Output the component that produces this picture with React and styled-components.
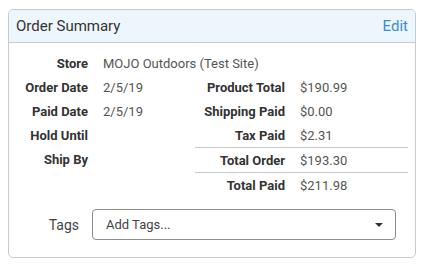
import styled, { createGlobalStyle } from "styled-components";

const GlobalStyle = createGlobalStyle`
  body {
    margin: 8px;
    background: #ffffff;
    font-family: Roboto, "Liberation Sans", sans-serif;
  }
`;

const Card = styled.div`
  margin-top: 1px;
  width: 408px;
  box-sizing: border-box;
  border: 1px solid #c3ccd5;
  border-radius: 5px;
  overflow: hidden;
`;

const Header = styled.div`
  display: flex;
  justify-content: space-between;
  align-items: center;
  height: 32px;
  padding: 0 7px;
  background-color: #eef6fd;
  border-bottom: 1px solid #c3ccd5;
  font-size: 15px;
`;

const Title = styled.span`
  color: #333333;
`;

const EditLink = styled.a`
  color: #3a8bd6;
  cursor: pointer;
`;

const Body = styled.div`
  padding: 8px 6px 17px 9px;
  font-size: 13px;
`;

const Row = styled.div`
  display: grid;
  grid-template-columns: ${(props) => props.$labelWidth || "70px"} 1fr;
  column-gap: 15px;
  align-items: center;
  height: ${(props) => (props.$divider ? "25px" : "24px")};
  box-sizing: border-box;
  border-top: ${(props) => (props.$divider ? "1px solid #c8c8c8" : "none")};
`;

const Label = styled.span`
  text-align: right;
  font-weight: 700;
  color: #333333;
  white-space: nowrap;
`;

const Value = styled.span`
  color: #555555;
  white-space: nowrap;
`;

const Columns = styled.div`
  display: flex;
`;

const LeftCol = styled.div`
  width: 177px;
`;

const RightCol = styled.div`
  width: 213px;
`;

const TagsRow = styled.div`
  display: grid;
  grid-template-columns: 61px 304px;
  column-gap: 13px;
  align-items: center;
  margin-top: 12px;
`;

const TagsLabel = styled.span`
  text-align: right;
  color: #444444;
  font-size: 14px;
`;

const Select = styled.div`
  display: flex;
  justify-content: space-between;
  align-items: center;
  height: 31px;
  box-sizing: border-box;
  padding: 0 12px 0 13px;
  border: 1px solid #8c8c8c;
  border-radius: 4px;
  color: #444444;
  font-size: 13px;
`;

const Caret = styled.span`
  width: 0;
  height: 0;
  border-left: 4px solid transparent;
  border-right: 4px solid transparent;
  border-top: 4px solid #333333;
`;

const left = [
  ["Order Date", "2/5/19"],
  ["Paid Date", "2/5/19"],
  ["Hold Until", ""],
  ["Ship By", ""],
];

const right = [
  ["Product Total", "$190.99"],
  ["Shipping Paid", "$0.00"],
  ["Tax Paid", "$2.31"],
  ["Total Order", "$193.30", true],
  ["Total Paid", "$211.98", true],
];

export default function App() {
  return (
    <>
      <GlobalStyle />
      <Card>
        <Header>
          <Title>Order Summary</Title>
          <EditLink>Edit</EditLink>
        </Header>
        <Body>
          <Row>
            <Label>Store</Label>
            <Value>MOJO Outdoors (Test Site)</Value>
          </Row>
          <Columns>
            <LeftCol>
              {left.map(([label, value]) => (
                <Row key={label}>
                  <Label>{label}</Label>
                  <Value>{value}</Value>
                </Row>
              ))}
            </LeftCol>
            <RightCol>
              {right.map(([label, value, divider]) => (
                <Row key={label} $labelWidth="90px" $divider={divider}>
                  <Label>{label}</Label>
                  <Value>{value}</Value>
                </Row>
              ))}
            </RightCol>
          </Columns>
          <TagsRow>
            <TagsLabel>Tags</TagsLabel>
            <Select>
              <span>Add Tags...</span>
              <Caret />
            </Select>
          </TagsRow>
        </Body>
      </Card>
    </>
  );
}
